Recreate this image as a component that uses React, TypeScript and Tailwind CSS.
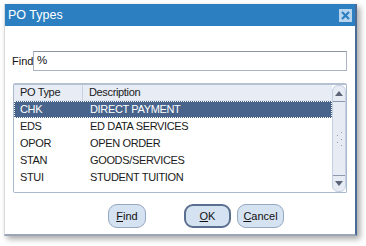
import React from "react";

const rows = [
  { type: "CHK", desc: "DIRECT PAYMENT" },
  { type: "EDS", desc: "ED DATA SERVICES" },
  { type: "OPOR", desc: "OPEN ORDER" },
  { type: "STAN", desc: "GOODS/SERVICES" },
  { type: "STUI", desc: "STUDENT TUITION" },
];

const font = { fontFamily: '"Liberation Sans", Arial, sans-serif' };

const Btn = ({ label, w, focus }: { label: string; w: string; focus?: boolean }) => (
  <button
    className={`${w} h-[24px] rounded-[9px] bg-[#d5e2f2] text-[11px] text-[#111] ${
      focus ? "border-2 border-[#5b6f8e]" : "border border-[#95a7c2]"
    }`}
  >
    <span className="underline underline-offset-1">{label[0]}</span>
    {label.slice(1)}
  </button>
);

export default function App() {
  return (
    <div className="w-[366px] h-[246px] bg-white overflow-hidden" style={font}>
      <div className="ml-[4px] mt-[4px] w-[353px] h-[232px] flex flex-col bg-white border-l border-[#d9d9d9] border-r-2 border-b-2 border-r-[#4a6a98] border-b-[#9aa6b8] shadow-[3px_3px_6px_rgba(0,0,0,0.35)]">
        <div className="h-[22px] bg-[#2c80c1] flex items-center justify-between pl-[3px] pr-[3px]">
          <span className="text-white text-[12.5px] leading-none">PO Types</span>
          <div className="w-[13px] h-[13px] bg-[#b9d5ee] flex items-center justify-center">
            <svg width="9" height="9" viewBox="0 0 9 9">
              <path d="M1 1 L8 8 M8 1 L1 8" stroke="#2c80c1" strokeWidth="2.2" />
            </svg>
          </div>
        </div>

        <div className="flex items-center mt-[25px] pl-[7px]">
          <span className="text-[11px] text-[#111] w-[21px]">Find</span>
          <div className="w-[314px] h-[20px] border border-[#a9b3c2] border-t-[#8d97a6] flex items-center pl-[3px] text-[11.5px] text-[#111]">
            %
          </div>
        </div>

        <div className="mt-[12px] ml-[8px] w-[334px] h-[110px] border border-[#aab8cf] border-t-2 border-t-[#b5c1d3] flex text-[11px] text-[#1a1a1a] tracking-[-0.35px] rounded-[2px]">
          <div className="flex-1 flex flex-col">
            <div className="h-[16px] bg-[#e7ecf5] flex items-center border-b border-[#dde3ee]">
              <span className="w-[69px] pl-[6px] border-r border-[#c7d1e2] h-full flex items-center">PO Type</span>
              <span className="pl-[6px]">Description</span>
            </div>
            {rows.map((r, i) => (
              <div
                key={r.type}
                className={`h-[17px] flex items-center ${
                  i === 0 ? "bg-[#48648c] text-white border border-dotted border-white" : "border border-transparent"
                }`}
              >
                <span className="w-[69px] pl-[5px]">{r.type}</span>
                <span className="pl-[6px]">{r.desc}</span>
              </div>
            ))}
          </div>
          <div className="w-[14px] bg-[#e6ebf4] flex flex-col justify-between rounded-[6px] border border-[#c4d0e2]">
            <div className="h-[16px] border-b border-[#8b97aa] flex items-center justify-center">
              <svg width="8" height="5" viewBox="0 0 8 5">
                <path d="M0 5 L4 0 L8 5 Z" fill="#5c6478" />
              </svg>
            </div>
            <div className="flex flex-col items-center">
              <svg width="8" height="16" viewBox="0 0 8 16">
                <path d="M2 5 L3 4 M6 2 L7 1 M2 12 L3 11 M6 9 L7 8 M6 15 L7 14" stroke="#8a9ab8" strokeWidth="1" />
              </svg>
            </div>
            <div className="h-[16px] border-t border-[#8b97aa] flex items-center justify-center">
              <svg width="8" height="5" viewBox="0 0 8 5">
                <path d="M0 0 L8 0 L4 5 Z" fill="#5c6478" />
              </svg>
            </div>
          </div>
        </div>

        <div className="flex mt-[11px] pl-[103px]">
          <Btn label="Find" w="w-[38px]" />
          <div className="w-[38px]" />
          <Btn label="OK" w="w-[47px]" focus />
          <div className="w-[6px]" />
          <Btn label="Cancel" w="w-[47px]" />
        </div>
      </div>
    </div>
  );
}
